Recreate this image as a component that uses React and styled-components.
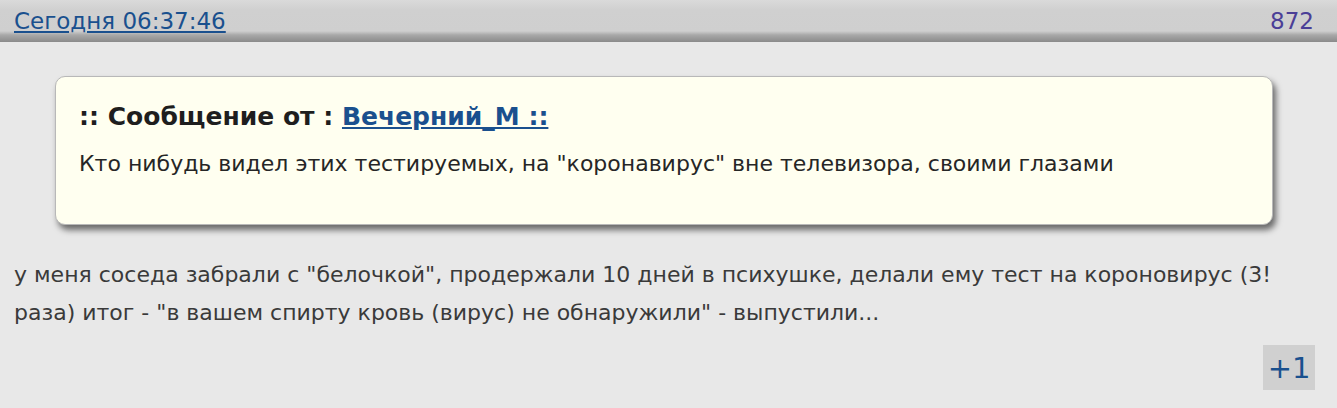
import React from "react";
import styled, { createGlobalStyle } from "styled-components";

const Global = createGlobalStyle`
  html, body { margin: 0; padding: 0; background: #e8e8e8; }
  body { font-family: "DejaVu Sans", Verdana, sans-serif; }
`;

const Page = styled.div`
  width: 1337px;
  height: 408px;
  background: #e8e8e8;
  overflow: hidden;
`;

const Header = styled.div`
  height: 42px;
  box-sizing: border-box;
  display: flex;
  align-items: center;
  justify-content: space-between;
  padding: 0 23px 0 14px;
  background: linear-gradient(to bottom, #dadada 0px, #d0d0d0 10px, #cfcfcf 31px, #a8a8a8 35px, #8a8a8a 42px);
`;

const DateLink = styled.a`
  color: #1a508e;
  font-size: 23px;
  text-decoration: underline;
`;

const Count = styled.span`
  color: #4b3f97;
  font-size: 23px;
`;

const Body = styled.div`
  padding: 34px 14px 0 14px;
`;

const Quote = styled.div`
  margin: 0 50px 0 41px;
  background: #fffff0;
  border: 1px solid #b8b8b8;
  border-radius: 10px;
  box-shadow: 3px 5px 6px rgba(0, 0, 0, 0.55);
  padding: 25px 23px 0 23px;
  height: 149px;
  box-sizing: border-box;
`;

const QuoteTitle = styled.div`
  font-weight: bold;
  font-size: 25px;
  color: #1e1e1e;
  line-height: 30px;
`;

const Author = styled.a`
  color: #1a508e;
  text-decoration: underline;
`;

const QuoteText = styled.div`
  margin-top: 19px;
  font-size: 22px;
  color: #262626;
  line-height: 26px;
`;

const Text = styled.div`
  margin-top: 31px;
  font-size: 22px;
  color: #3a3a3a;
  line-height: 38px;
`;

const Footer = styled.div`
  display: flex;
  justify-content: flex-end;
  margin-top: 13px;
  padding-right: 8px;
`;

const PlusButton = styled.button`
  border: none;
  background: #d0d0d0;
  color: #1a508e;
  font-family: "DejaVu Sans", Verdana, sans-serif;
  font-size: 29px;
  width: 52px;
  height: 45px;
  padding: 0;
`;

export default function App() {
  return (
    <Page>
      <Global />
      <Header>
        <DateLink href="#">Сегодня 06:37:46</DateLink>
        <Count>872</Count>
      </Header>
      <Body>
        <Quote>
          <QuoteTitle>
            :: Сообщение от : <Author href="#">Вечерний_М ::</Author>
          </QuoteTitle>
          <QuoteText>
            Кто нибудь видел этих тестируемых, на "коронавирус" вне телевизора, своими глазами
          </QuoteText>
        </Quote>
        <Text>
          у меня соседа забрали с "белочкой", продержали 10 дней в психушке, делали ему тест на короновирус (3! раза) итог - "в вашем спирту кровь (вирус) не обнаружили" - выпустили...
        </Text>
        <Footer>
          <PlusButton>+1</PlusButton>
        </Footer>
      </Body>
    </Page>
  );
}
